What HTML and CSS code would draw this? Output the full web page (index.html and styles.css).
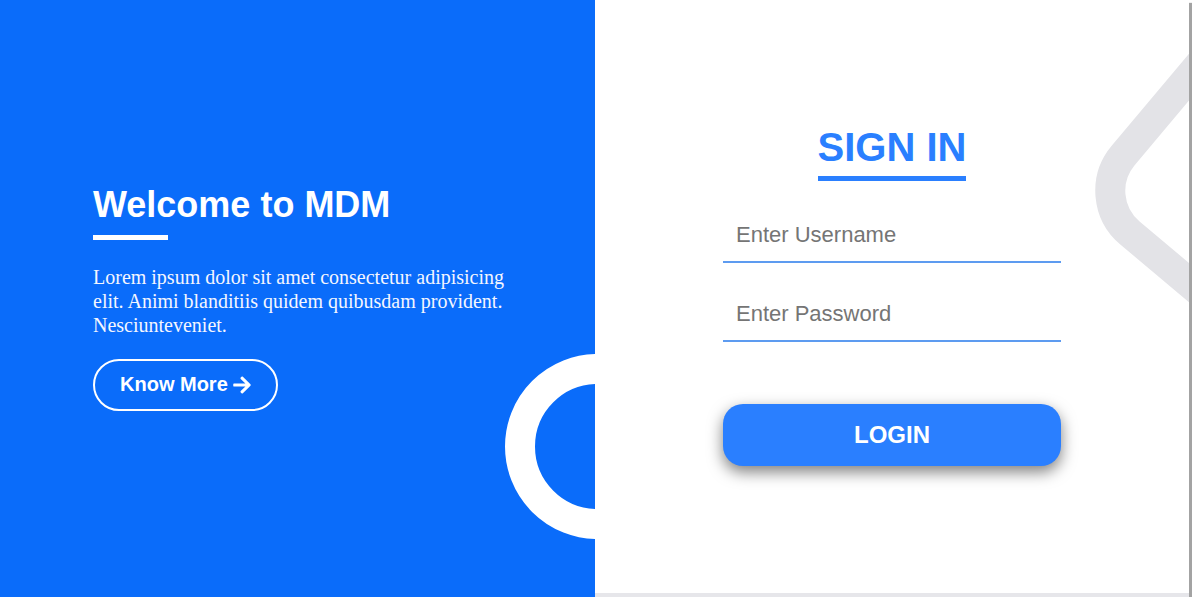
FILE: index.html
```html
<!DOCTYPE html>
<html lang="en">
<head>
<meta charset="utf-8">
<title>MDM Sign In</title>
<link rel="stylesheet" href="styles.css">
</head>
<body>
<div class="page">
  <section class="intro">
    <h1 class="intro-title">Welcome to MDM</h1>
    <div class="intro-bar"></div>
    <p class="intro-text">Lorem ipsum dolor sit amet consectetur adipisicing elit. Animi blanditiis quidem quibusdam provident. Nesciunteveniet.</p>
    <div class="intro-actions">
      <a class="know-more" href="#">Know More <svg class="arrow" viewBox="0 0 448 512" aria-hidden="true"><path d="M190.5 66.9l22.2-22.2c9.4-9.4 24.6-9.4 33.9 0L441 239c9.4 9.4 9.4 24.6 0 33.9L246.6 467.3c-9.4 9.4-24.6 9.4-33.9 0l-22.2-22.2c-9.5-9.5-9.3-25 .4-34.3L311.4 296H24c-13.3 0-24-10.7-24-24v-32c0-13.3 10.7-24 24-24h287.4L190.9 101.2c-9.8-9.3-10-24.8-.4-34.3z"/></svg></a>
    </div>
    <div class="ring"></div>
  </section>
  <section class="signin">
    <div class="diamond"></div>
    <h2 class="signin-title">SIGN IN</h2>
    <form class="signin-form">
      <input class="field" type="text" placeholder="Enter Username">
      <input class="field field-second" type="password" placeholder="Enter Password">
      <button class="login" type="button">LOGIN</button>
    </form>
  </section>
</div>
</body>
</html>
```

FILE: styles.css
```css
* { box-sizing: border-box; }

html, body {
  margin: 0;
  padding: 0;
  background: #ffffff;
}

body {
  font-family: "Liberation Sans", Arial, sans-serif;
  overflow: hidden;
}

.page {
  width: 1189px;
  height: 597px;
  display: flex;
  box-shadow: 3px 3px 1px rgba(0, 0, 0, 0.36);
}

.intro {
  position: relative;
  width: 595px;
  flex: 0 0 595px;
  height: 100%;
  background: #0a6cfa;
  color: #ffffff;
  overflow: hidden;
  display: flex;
  flex-direction: column;
  justify-content: center;
  padding-left: 93px;
  padding-bottom: 3px;
}

.intro-title {
  margin: 0;
  font-size: 36px;
  font-weight: bold;
  line-height: 41px;
}

.intro-bar {
  width: 75px;
  height: 5px;
  background: #ffffff;
  margin-top: 10px;
}

.intro-text {
  margin: 25px 0 0;
  width: 420px;
  font-family: "Liberation Serif", "Times New Roman", serif;
  font-size: 20px;
  line-height: 24px;
  color: #f4f6ff;
}

.intro-actions {
  display: flex;
  margin-top: 22px;
}

.know-more {
  display: inline-flex;
  align-items: center;
  gap: 5px;
  height: 52px;
  padding: 0 25px;
  border: 2px solid #ffffff;
  border-radius: 26px;
  color: #ffffff;
  text-decoration: none;
  font-size: 20px;
  font-weight: bold;
}

.arrow {
  width: 18px;
  height: 20px;
  fill: #ffffff;
}

.ring {
  position: absolute;
  left: 505px;
  top: 354px;
  width: 185px;
  height: 185px;
  border: 30px solid #ffffff;
  border-radius: 50%;
}

.signin {
  position: relative;
  flex: 1;
  height: 100%;
  background: #ffffff;
  overflow: hidden;
  display: flex;
  flex-direction: column;
  align-items: center;
  padding-top: 124px;
  border-bottom: 4px solid #e6e6ea;
}

.diamond {
  position: absolute;
  left: 533px;
  top: 31px;
  width: 300px;
  height: 300px;
  border: 30px solid #e3e3e7;
  border-radius: 70px;
  transform: rotate(40deg);
}

.signin-title {
  position: relative;
  margin: 0;
  font-size: 40px;
  font-weight: bold;
  line-height: 46px;
  color: #2a7fff;
  padding-bottom: 6px;
  border-bottom: 5px solid #2a7fff;
}

.signin-form {
  position: relative;
  width: 338px;
  margin-top: 28px;
  display: flex;
  flex-direction: column;
}

.field {
  display: block;
  width: 100%;
  height: 54px;
  border: none;
  border-bottom: 2px solid #5d9bf0;
  background: transparent;
  padding: 0 13px;
  font-family: "Liberation Sans", Arial, sans-serif;
  font-size: 22px;
  color: #333333;
  outline: none;
}

.field::placeholder {
  color: #757575;
}

.field-second {
  margin-top: 25px;
}

.login {
  margin-top: 62px;
  height: 62px;
  width: 100%;
  border: none;
  border-radius: 20px;
  background: #2a7fff;
  color: #ffffff;
  font-family: "Liberation Sans", Arial, sans-serif;
  font-size: 24px;
  font-weight: bold;
  box-shadow: 0 6px 15px rgba(0, 0, 0, 0.5);
  cursor: pointer;
}
```
